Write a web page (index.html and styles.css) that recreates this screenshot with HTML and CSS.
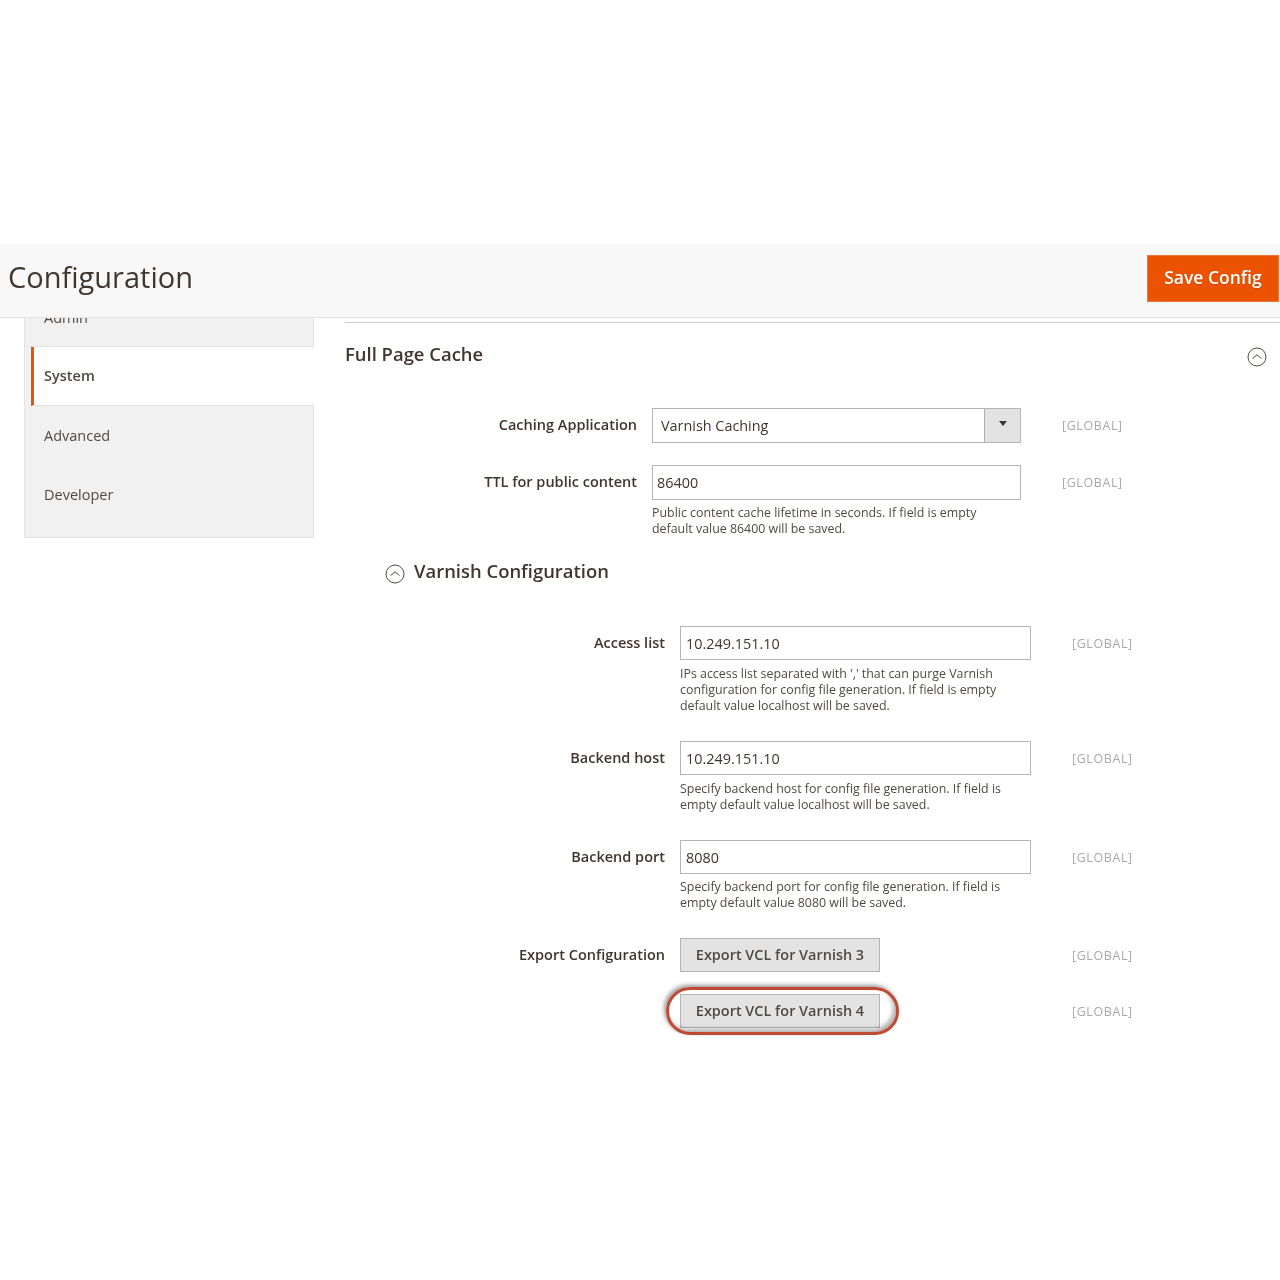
FILE: index.html
```html
<!DOCTYPE html>
<html lang="en">
<head>
<meta charset="utf-8">
<title>Configuration</title>
<link rel="stylesheet" href="styles.css">
</head>
<body>
<header class="page-header">
  <h1 class="page-title">Configuration</h1>
  <button class="save-btn" type="button">Save Config</button>
</header>
<main class="layout">
  <nav class="sidebar">
    <div class="tab tab-clipped"><span>Admin</span></div>
    <div class="tab tab-active">System</div>
    <div class="tab">Advanced</div>
    <div class="tab tab-last">Developer</div>
  </nav>
  <section class="content">
    <div class="section-head">
      <h2 class="section-title">Full Page Cache</h2>
      <svg class="chevron" viewBox="0 0 20 20"><circle cx="10" cy="10" r="9"/><path d="M5.500 11.500 10 7.800l4.500 3.700"/></svg>
    </div>
    <div class="form-row row-select">
      <label class="label">Caching Application</label>
      <div class="select"><span class="select-value">Varnish Caching</span><span class="select-arrow"><i></i></span></div>
      <span class="scope">[GLOBAL]</span>
    </div>
    <div class="form-row row-ttl">
      <label class="label">TTL for public content</label>
      <div class="field">
        <div class="input">86400</div>
        <p class="note">Public content cache lifetime in seconds. If field is empty<br>default value 86400 will be saved.</p>
      </div>
      <span class="scope">[GLOBAL]</span>
    </div>
    <div class="sub-head">
      <svg class="chevron" viewBox="0 0 20 20"><circle cx="10" cy="10" r="9"/><path d="M5.500 11.500 10 7.800l4.500 3.700"/></svg>
      <h3 class="sub-title">Varnish Configuration</h3>
    </div>
    <div class="sub-form">
      <div class="form-row row-access">
        <label class="label">Access list</label>
        <div class="field">
          <div class="input">10.249.151.10</div>
          <p class="note">IPs access list separated with ',' that can purge Varnish<br>configuration for config file generation. If field is empty<br>default value localhost will be saved.</p>
        </div>
        <span class="scope">[GLOBAL]</span>
      </div>
      <div class="form-row row-host">
        <label class="label">Backend host</label>
        <div class="field">
          <div class="input input-high">10.249.151.10</div>
          <p class="note">Specify backend host for config file generation. If field is<br>empty default value localhost will be saved.</p>
        </div>
        <span class="scope">[GLOBAL]</span>
      </div>
      <div class="form-row row-port">
        <label class="label">Backend port</label>
        <div class="field">
          <div class="input input-high">8080</div>
          <p class="note note-tight">Specify backend port for config file generation. If field is<br>empty default value 8080 will be saved.</p>
        </div>
        <span class="scope">[GLOBAL]</span>
      </div>
      <div class="form-row row-export">
        <label class="label">Export Configuration</label>
        <div class="field"><button class="export-btn" type="button">Export VCL for Varnish 3</button></div>
        <span class="scope">[GLOBAL]</span>
      </div>
      <div class="form-row row-export2">
        <label class="label"></label>
        <div class="field">
          <div class="ring-wrap">
            <button class="export-btn" type="button">Export VCL for Varnish 4</button>
            <span class="ring"></span>
          </div>
        </div>
        <span class="scope">[GLOBAL]</span>
      </div>
    </div>
  </section>
</main>
</body>
</html>
```
FILE: styles.css
```css
* { box-sizing: border-box; }
html, body { margin: 0; padding: 0; background: #fff; }
body {
  padding-top: 244px;
  font-family: "Open Sans", sans-serif;
  color: #41362f;
  min-height: 1280px;
  filter: blur(.4px);
}
.page-header {
  height: 74px;
  background: #f8f8f8;
  border-bottom: 1px solid #e3e3e3;
  display: flex;
  align-items: flex-start;
  justify-content: space-between;
  padding: 11px 1px 0 8px;
}
.page-title {
  margin: 0;
  font-size: 29px;
  line-height: 44px;
  font-weight: 400;
  color: #41362f;
}
.save-btn {
  width: 132px;
  height: 47px;
  background: #eb5202;
  border: 1px solid #f0753a;
  color: #fff;
  font: 600 17.500px/1 "Open Sans", sans-serif;
  padding: 0 0 2px;
  text-shadow: 0 1px 1px rgba(0,0,0,.15);
}
.layout { display: flex; align-items: flex-start; }
.sidebar {
  width: 290px;
  margin-left: 24px;
  flex: none;
  background: #f1f1f1;
  border: 1px solid #e3e3e3;
  border-width: 0 1px 1px;
  font-size: 14.500px;
  color: #514943;
}
.tab {
  height: 59px;
  padding-left: 19px;
  line-height: 60px;
}
.tab-clipped {
  height: 29px;
  overflow: hidden;
  line-height: 16px;
  border-bottom: 1px solid #e3e3e3;
}
.tab-clipped span { display: block; margin-top: -8px; }
.tab-active {
  height: 59px;
  margin-left: 6px;
  margin-right: -1px;
  padding-left: 10px;
  background: #fff;
  border-left: 3px solid #eb5202;
  border-bottom: 1px solid #e3e3e3;
  font-weight: 600;
  line-height: 58px;
}
.tab-last { height: 72px; line-height: 60px; }
.content { flex: 1; margin-left: 31px; min-width: 0; }
.section-head {
  margin-top: 4px;
  border-top: 1px solid #cfcfcf;
  height: 86px;
  display: flex;
  justify-content: space-between;
  align-items: flex-start;
  padding: 18px 13px 0 0;
}
.section-title, .sub-title {
  margin: 0;
  font-size: 18.450px;
  line-height: 26px;
  font-weight: 600;
  color: #41362f;
}
.section-head .chevron { margin-top: 6px; }
.chevron {
  width: 20px;
  height: 20px;
  flex: none;
  fill: none;
  stroke: #514943;
  stroke-width: 1;
}
.form-row { display: flex; align-items: flex-start; }
.label {
  flex: none;
  width: 292px;
  text-align: right;
  font-size: 14.500px;
  font-weight: 600;
  line-height: 34px;
  color: #41362f;
}
.row-select { height: 57px; }
.row-ttl { height: 85px; }
.select, .input {
  margin-left: 15px;
  width: 369px;
  height: 35px;
  border: 1px solid #b5b5b5;
  background: #fff;
  font-size: 14.400px;
  line-height: 33px;
  padding-left: 4px;
  color: #41362f;
}
.select { display: flex; justify-content: space-between; padding-left: 8px; padding-right: 0; flex: none; }
.select-arrow {
  width: 36px;
  height: 33px;
  background: #e3e3e3;
  border-left: 1px solid #adadad;
  display: flex;
  justify-content: center;
  padding-top: 12px;
}
.select-arrow i {
  width: 0;
  height: 0;
  border: 4px solid transparent;
  border-top: 5px solid #41362f;
  border-bottom: 0;
}
.field { flex: none; width: 384px; }
.note {
  margin: 5px 0 0 15px;
  font-size: 12.400px;
  line-height: 16px;
  color: #514943;
}
.scope {
  margin-left: 41px;
  font-size: 12.400px;
  line-height: 36px;
  color: #a9a9a9;
  letter-spacing: .65px;
}
.sub-head {
  margin-left: 40px;
  display: flex;
  align-items: flex-start;
  gap: 9px;
  height: 76px;
}
.sub-head .chevron { margin-top: 14px; }
.sub-title { margin-top: 8px; }
.sub-form .label { width: 320px; }
.sub-form .input {
  width: 351px;
  height: 34px;
  padding-left: 5px;
  line-height: 34px;
}
.sub-form .input-high { line-height: 33px; }
.sub-form .field { width: 377px; }
.sub-form .note { margin-top: 6px; }
.sub-form .note-tight { margin-top: 5px; }
.sub-form .scope { margin-left: 0; padding-left: 30px; }
.row-access { height: 115px; }
.row-host { height: 99px; }
.row-port { height: 98px; }
.row-export { height: 56px; }
.export-btn {
  display: block;
  margin-left: 15px;
  width: 200px;
  height: 34px;
  background: #e3e3e3;
  border: 1px solid #b5b5b5;
  color: #514943;
  font: 600 14.450px/1 "Open Sans", sans-serif;
  padding: 0;
}
.ring-wrap { position: relative; }
.ring {
  position: absolute;
  left: 1px;
  top: -7px;
  width: 233px;
  height: 48px;
  border: 3.500px solid #bf4a33;
  border-radius: 24px;
  box-shadow: -2px -2px 4px rgba(0,0,0,.4), inset -3px -3px 4px rgba(0,0,0,.3);
}
```
